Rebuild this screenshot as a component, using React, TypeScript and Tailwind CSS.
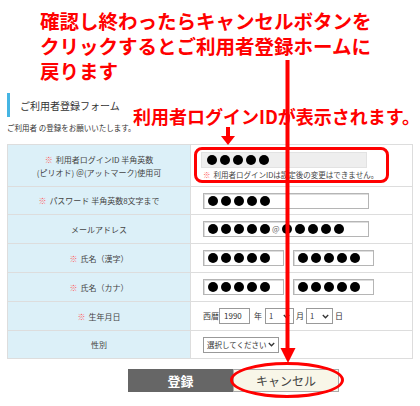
import React from 'react';

const Dots = ({ n = 5 }: { n?: number }) => (
  <span className="flex items-center gap-[3px]">
    {Array.from({ length: n }).map((_, i) => (
      <span key={i} className="block w-[10px] h-[10px] rounded-full bg-black" />
    ))}
  </span>
);

const Req = () => <span className="text-[#ff5a5a] mr-[3px]">※</span>;

const Input = ({ w, children }: { w: string; children?: React.ReactNode }) => (
  <div className={`${w} h-[16px] border border-[#b5b5b5] bg-white flex items-center pl-[4px] shadow-[inset_1px_1px_0_#ddd]`}>
    {children}
  </div>
);

const Select = ({ w, label }: { w: string; label: string }) => (
  <div className={`${w} h-[16px] border border-[#999] bg-white flex items-center justify-between px-[3px] text-[7.5px] text-[#333] whitespace-nowrap`}>
    <span>{label}</span>
    <svg width="7" height="5" viewBox="0 0 7 5" className="shrink-0">
      <path d="M0.8 1 L3.5 3.8 L6.2 1" stroke="#333" strokeWidth="1.3" fill="none" />
    </svg>
  </div>
);

function Row({ h, label, children }: { h: string; label: React.ReactNode; children: React.ReactNode }) {
  return (
    <div className={`flex ${h} border-b border-[#ddd] last:border-b-0`}>
      <div className="w-[183px] shrink-0 bg-[#dcf0f8] border-r border-[#ddd] flex items-center justify-center text-center text-[8px] leading-[13px] text-[#444]">
        {label}
      </div>
      <div className="flex-1 flex flex-col justify-center pl-[12px]">{children}</div>
    </div>
  );
}

export default function App() {
  return (
    <div className="relative w-[420px] h-[406px] bg-white overflow-hidden font-['Noto_Sans_CJK_JP',sans-serif]">
      {/* top annotation */}
      <div className="pt-[8px] pl-[40px] text-[19.5px] leading-[25px] font-bold text-[#ff0000]">
        <div>確認し終わったらキャンセルボタンを</div>
        <div>クリックするとご利用者登録ホームに</div>
        <div>戻ります</div>
      </div>

      {/* heading */}
      <div className="mt-[10px] ml-[7px] h-[24px] border-l-[3px] border-[#45b5e3] pl-[10px] flex items-center text-[10px] text-[#333]">
        ご利用者登録フォーム
      </div>
      <div className="mt-[5px] ml-[7px] text-[7.5px] text-[#333] leading-[12px]">ご利用者 の登録をお願いいたします。</div>

      {/* table */}
      <div className="mt-[10px] ml-[7px] w-[406px] border border-[#ddd]">
        <Row
          h="h-[42px]"
          label={
            <div>
              <div>
                <Req />利用者ログインID 半角英数
              </div>
              <div>(ピリオド) ＠(アットマーク)使用可</div>
            </div>
          }
        >
          <div className="w-[166px] h-[16px] bg-[#eee] border border-[#e2e2e2] flex items-center pl-[5px] -ml-[2px]">
            <Dots />
          </div>
          <div className="mt-[2px] text-[7.5px] leading-[10px] text-[#444] whitespace-nowrap">
            <Req />利用者ログインIDは設定後の変更はできません。
          </div>
        </Row>
        <Row h="h-[28px]" label={<span><Req />パスワード 半角英数8文字まで</span>}>
          <Input w="w-[166px]">
            <Dots />
          </Input>
        </Row>
        <Row h="h-[29px]" label={<span>メールアドレス</span>}>
          <Input w="w-[166px]">
            <Dots />
            <span className="mx-[2px] text-[8px] text-[#666]">@</span>
            <Dots />
          </Input>
        </Row>
        <Row h="h-[29px]" label={<span><Req />氏名（漢字）</span>}>
          <div className="flex gap-[9px]">
            <Input w="w-[81px]">
              <Dots />
            </Input>
            <Input w="w-[81px]">
              <Dots />
            </Input>
          </div>
        </Row>
        <Row h="h-[29px]" label={<span><Req />氏名（カナ）</span>}>
          <div className="flex gap-[9px]">
            <Input w="w-[81px]">
              <Dots />
            </Input>
            <Input w="w-[81px]">
              <Dots />
            </Input>
          </div>
        </Row>
        <Row h="h-[29px]" label={<span><Req />生年月日</span>}>
          <div className="flex items-center text-[8px] text-[#333]">
            <span>西暦</span>
            <div className="w-[31px] h-[16px] border border-[#999] bg-white flex items-center pl-[4px]">1990</div>
            <span className="ml-[4px] mr-[3px]">年</span>
            <Select w="w-[29px]" label="1" />
            <span className="mx-[2px]">月</span>
            <Select w="w-[27px]" label="1" />
            <span className="ml-[2px]">日</span>
          </div>
        </Row>
        <Row h="h-[27px]" label={<span>性別</span>}>
          <Select w="w-[76px]" label="選択してください" />
        </Row>
      </div>

      {/* buttons */}
      <div className="mt-[10px] ml-[128px] flex">
        <div className="w-[105px] h-[23px] bg-[#666] text-white text-[13px] font-bold flex items-center justify-center">登録</div>
        <div className="w-[106px] h-[23px] bg-[#f8f6e8] border border-[#aaa] text-[#444] text-[12px] flex items-center justify-center">キャンセル</div>
      </div>

      {/* overlays */}
      <div className="absolute left-[133px] top-[104px] text-[18px] leading-[24px] font-bold text-[#ff0000] whitespace-nowrap">
        利用者ログインIDが表示されます。
      </div>
      <svg className="absolute left-[220px] top-[127px]" width="16" height="19" viewBox="0 0 16 19">
        <rect x="6" y="0" width="4" height="10" fill="#ff0000" />
        <path d="M1 9 L15 9 L8 18 Z" fill="#ff0000" />
      </svg>
      <div className="absolute left-[194px] top-[147px] w-[195px] h-[36px] border-[3px] border-[#ff0000] rounded-[8px]" />
      <svg className="absolute left-[279px] top-[60px]" width="18" height="305" viewBox="0 0 18 305">
        <rect x="6.5" y="0" width="4" height="292" fill="#ff0000" />
        <path d="M1.5 288 L16.5 288 L9 303 Z" fill="#ff0000" />
      </svg>
      <div className="absolute left-[230px] top-[362px] w-[114px] h-[36px] border-[3px] border-[#ff0000] rounded-[50%]" />
    </div>
  );
}
